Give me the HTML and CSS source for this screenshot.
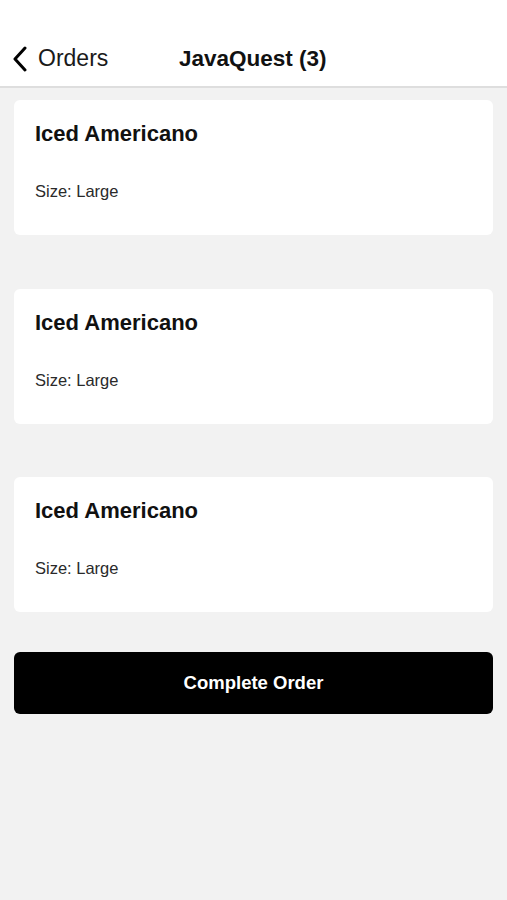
FILE: index.html
```html
<!DOCTYPE html>
<html>
<head>
<meta charset="utf-8">
<link rel="stylesheet" href="styles.css">
</head>
<body>
<header class="nav">
  <div class="back">
    <svg class="chev" width="16" height="26" viewBox="0 0 16 26"><path d="M13 2 L3 13 L13 24" fill="none" stroke="#000" stroke-width="3" stroke-linecap="round" stroke-linejoin="round"/></svg>
    <span class="back-label">Orders</span>
  </div>
  <div class="title">JavaQuest (3)</div>
</header>
<main class="content">
  <section class="card">
    <h2 class="item">Iced Americano</h2>
    <p class="size">Size: Large</p>
  </section>
  <section class="card">
    <h2 class="item">Iced Americano</h2>
    <p class="size">Size: Large</p>
  </section>
  <section class="card">
    <h2 class="item">Iced Americano</h2>
    <p class="size">Size: Large</p>
  </section>
  <button class="complete">Complete Order</button>
</main>
</body>
</html>
```
FILE: styles.css
```css
html, body {
  margin: 0;
  padding: 0;
}
body {
  background: #f2f2f2;
  font-family: "Liberation Sans", Arial, sans-serif;
  color: #000;
  width: 507px;
  height: 900px;
  overflow: hidden;
}
.nav {
  background: #fff;
  height: 88px;
  border-bottom: 2px solid #dedede;
  display: flex;
  align-items: flex-end;
  padding: 0 0 14px 12px;
  box-sizing: border-box;
}
.back {
  display: flex;
  align-items: center;
  gap: 10px;
  width: 167px;
}
.chev {
  display: block;
}
.back-label {
  font-size: 23px;
  color: #1a1a1a;
}
.title {
  font-size: 22.5px;
  font-weight: bold;
  color: #111;
}
.content {
  padding: 12px 14px 0 14px;
  display: flex;
  flex-direction: column;
}
.card {
  background: #fff;
  border-radius: 6px;
  height: 135px;
  box-sizing: border-box;
  padding: 21px 21px 0 21px;
  margin-bottom: 53.5px;
}
.item {
  margin: 0;
  font-size: 22px;
  font-weight: bold;
  line-height: 26px;
  color: #111;
}
.size {
  margin: 34px 0 0 0;
  font-size: 16.5px;
  line-height: 20px;
  color: #2a2a2a;
}
.content .card:last-of-type {
  margin-bottom: 40px;
}
.complete {
  height: 62px;
  background: #000;
  color: #fff;
  border: none;
  border-radius: 6px;
  font-family: "Liberation Sans", Arial, sans-serif;
  font-size: 18.5px;
  font-weight: bold;
  width: 100%;
}
```
